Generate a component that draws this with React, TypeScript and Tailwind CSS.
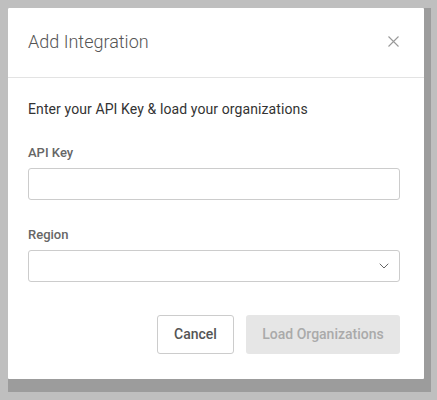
import { ChevronDown } from "lucide-react";

export default function App() {
  return (
    <div
      className="h-[400px] w-[437px] bg-[#bfbfbf] p-2"
      style={{ fontFamily: "Roboto, 'Liberation Sans', sans-serif" }}
    >
      <div className="h-[384px] w-[423px] bg-[#9c9c9c]">
        <div className="flex h-[371px] w-[416px] flex-col rounded-[1px] bg-white">
          <div className="flex h-[70px] items-center justify-between border-b border-[#e3e3e3] pb-[2px] pl-5 pr-6">
            <h2 className="text-[18px] font-light text-[#555]">Add Integration</h2>
            <button className="mr-[1px] text-[#999]" aria-label="Close">
              <svg width="11" height="11" viewBox="0 0 11 11" fill="none">
                <path d="M0.5 0.5L10.5 10.5M10.5 0.5L0.5 10.5" stroke="currentColor" strokeWidth="1.1" />
              </svg>
            </button>
          </div>

          <div className="flex flex-col pl-5 pr-6 pt-[21px]">
            <p className="h-5 text-[14px] leading-5 tracking-[0.1px] text-[#333]">
              Enter your API Key &amp; load your organizations
            </p>

            <label className="mt-[25px] h-[18px] text-[13px] font-medium leading-[18px] text-[#666]">
              API Key
            </label>
            <input
              type="text"
              className="mt-[6px] h-8 w-full rounded-[3px] border border-[#ccc] px-2 text-[14px] outline-none"
            />

            <label className="mt-[26px] h-[18px] text-[13px] font-medium leading-[18px] text-[#666]">
              Region
            </label>
            <div className="mt-[6px] flex h-8 w-full items-center justify-end rounded-[3px] border border-[#ccc] pr-[7px]">
              <ChevronDown size={16} strokeWidth={1.5} className="text-[#666]" />
            </div>

            <div className="mt-[33px] flex justify-end gap-3">
              <button className="h-[39px] w-[77px] rounded-[3px] border border-[#ccc] text-[14px] font-medium text-[#555]">
                Cancel
              </button>
              <button
                disabled
                className="h-[39px] w-[154px] rounded-[3px] bg-[#e6e6e6] text-[14px] font-medium text-[#aaa]"
              >
                Load Organizations
              </button>
            </div>
          </div>
        </div>
      </div>
    </div>
  );
}
